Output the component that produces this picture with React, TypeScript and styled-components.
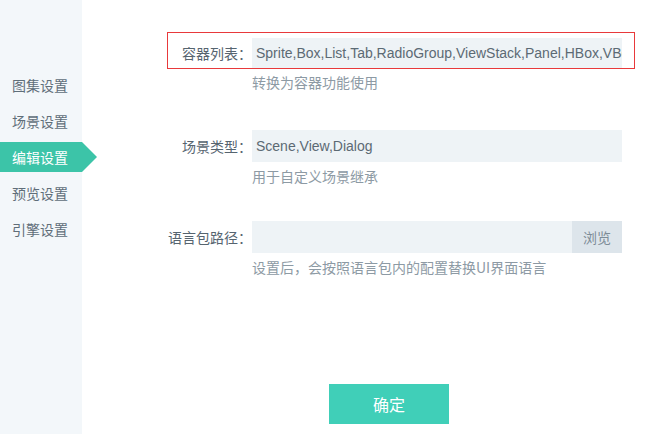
import React from "react";
import styled, { createGlobalStyle } from "styled-components";

const GlobalStyle = createGlobalStyle`
  html, body { margin: 0; padding: 0; background: #ffffff; }
  body { font-family: "Noto Sans CJK SC", "Liberation Sans", sans-serif; }
  * { box-sizing: border-box; }
`;

const Page = styled.div`
  display: flex;
  width: 670px;
  height: 434px;
  overflow: hidden;
  background: #ffffff;
`;

const Sidebar = styled.nav`
  width: 82px;
  flex: none;
  background: #f3f7fa;
  padding-top: 70px;
  display: flex;
  flex-direction: column;
  gap: 6px;
`;

const NavItem = styled.div<{ $active?: boolean }>`
  position: relative;
  height: 30px;
  line-height: 30px;
  padding-left: 12px;
  font-size: 14px;
  color: ${(p) => (p.$active ? "#ffffff" : "#5f6e79")};
  background: ${(p) => (p.$active ? "#3cc4a8" : "transparent")};
  &::after {
    content: "";
    display: ${(p) => (p.$active ? "block" : "none")};
    position: absolute;
    top: 0;
    right: -15px;
    border-left: 15px solid #3cc4a8;
    border-top: 15px solid transparent;
    border-bottom: 15px solid transparent;
  }
`;

const Main = styled.main`
  flex: 1;
  display: flex;
  flex-direction: column;
  padding: 32px 0 0 85px;
`;

const FieldGroup = styled.section<{ $highlighted?: boolean }>`
  height: ${(p) => (p.$highlighted ? 97 : 91)}px;
  display: flex;
  flex-direction: column;
`;

const FieldRow = styled.div<{ $highlighted?: boolean }>`
  display: flex;
  align-items: center;
  width: 468px;
  border: 1px solid ${(p) => (p.$highlighted ? "#e8393b" : "transparent")};
  padding: ${(p) => (p.$highlighted ? "5px 12px 0 0" : "0 12px 0 0")};
`;

const Label = styled.label`
  width: 84px;
  flex: none;
  text-align: right;
  font-size: 14px;
  color: #56646f;
  white-space: nowrap;
`;

const Field = styled.div<{ $highlighted?: boolean }>`
  width: 370px;
  height: ${(p) => (p.$highlighted ? 30 : 32)}px;
  display: flex;
  background: #eef3f6;
  overflow: hidden;
`;

const TextInput = styled.input`
  flex: 1;
  min-width: 0;
  height: 100%;
  border: none;
  outline: none;
  background: transparent;
  padding: 0 0 0 4px;
  font-family: "Liberation Sans", Arial, sans-serif;
  font-size: 14px;
  color: #5c6a74;
`;

const BrowseButton = styled.button`
  width: 50px;
  flex: none;
  height: 100%;
  border: none;
  background: #dde5eb;
  color: #7d8c97;
  font-family: "Noto Sans CJK SC", sans-serif;
  font-size: 14px;
  padding: 0;
`;

const Hint = styled.div`
  margin: 3px 0 0 85px;
  line-height: 20px;
  font-size: 14px;
  color: #8d9aa4;
  white-space: nowrap;
`;

const Footer = styled.div`
  margin-top: 73px;
  padding-left: 162px;
`;

const ConfirmButton = styled.button`
  width: 120px;
  height: 40px;
  border: none;
  background: #40cfb8;
  color: #ffffff;
  font-family: "Noto Sans CJK SC", sans-serif;
  font-size: 16px;
  padding: 0;
`;

const navItems = ["图集设置", "场景设置", "编辑设置", "预览设置", "引擎设置"];

const fields = [
  {
    label: "容器列表：",
    value: "Sprite,Box,List,Tab,RadioGroup,ViewStack,Panel,HBox,VBox,Tree",
    hint: "转换为容器功能使用",
    highlighted: true,
    browse: false,
  },
  {
    label: "场景类型：",
    value: "Scene,View,Dialog",
    hint: "用于自定义场景继承",
    highlighted: false,
    browse: false,
  },
  {
    label: "语言包路径：",
    value: "",
    hint: "设置后，会按照语言包内的配置替换UI界面语言",
    highlighted: false,
    browse: true,
  },
];

export default function App() {
  return (
    <>
      <GlobalStyle />
      <Page>
        <Sidebar>
          {navItems.map((item) => (
            <NavItem key={item} $active={item === "编辑设置"}>
              {item}
            </NavItem>
          ))}
        </Sidebar>
        <Main>
          {fields.map((f) => (
            <FieldGroup key={f.label} $highlighted={f.highlighted}>
              <FieldRow $highlighted={f.highlighted}>
                <Label>{f.label}</Label>
                <Field $highlighted={f.highlighted}>
                  <TextInput readOnly value={f.value} />
                  {f.browse && <BrowseButton>浏览</BrowseButton>}
                </Field>
              </FieldRow>
              <Hint>{f.hint}</Hint>
            </FieldGroup>
          ))}
          <Footer>
            <ConfirmButton>确定</ConfirmButton>
          </Footer>
        </Main>
      </Page>
    </>
  );
}
